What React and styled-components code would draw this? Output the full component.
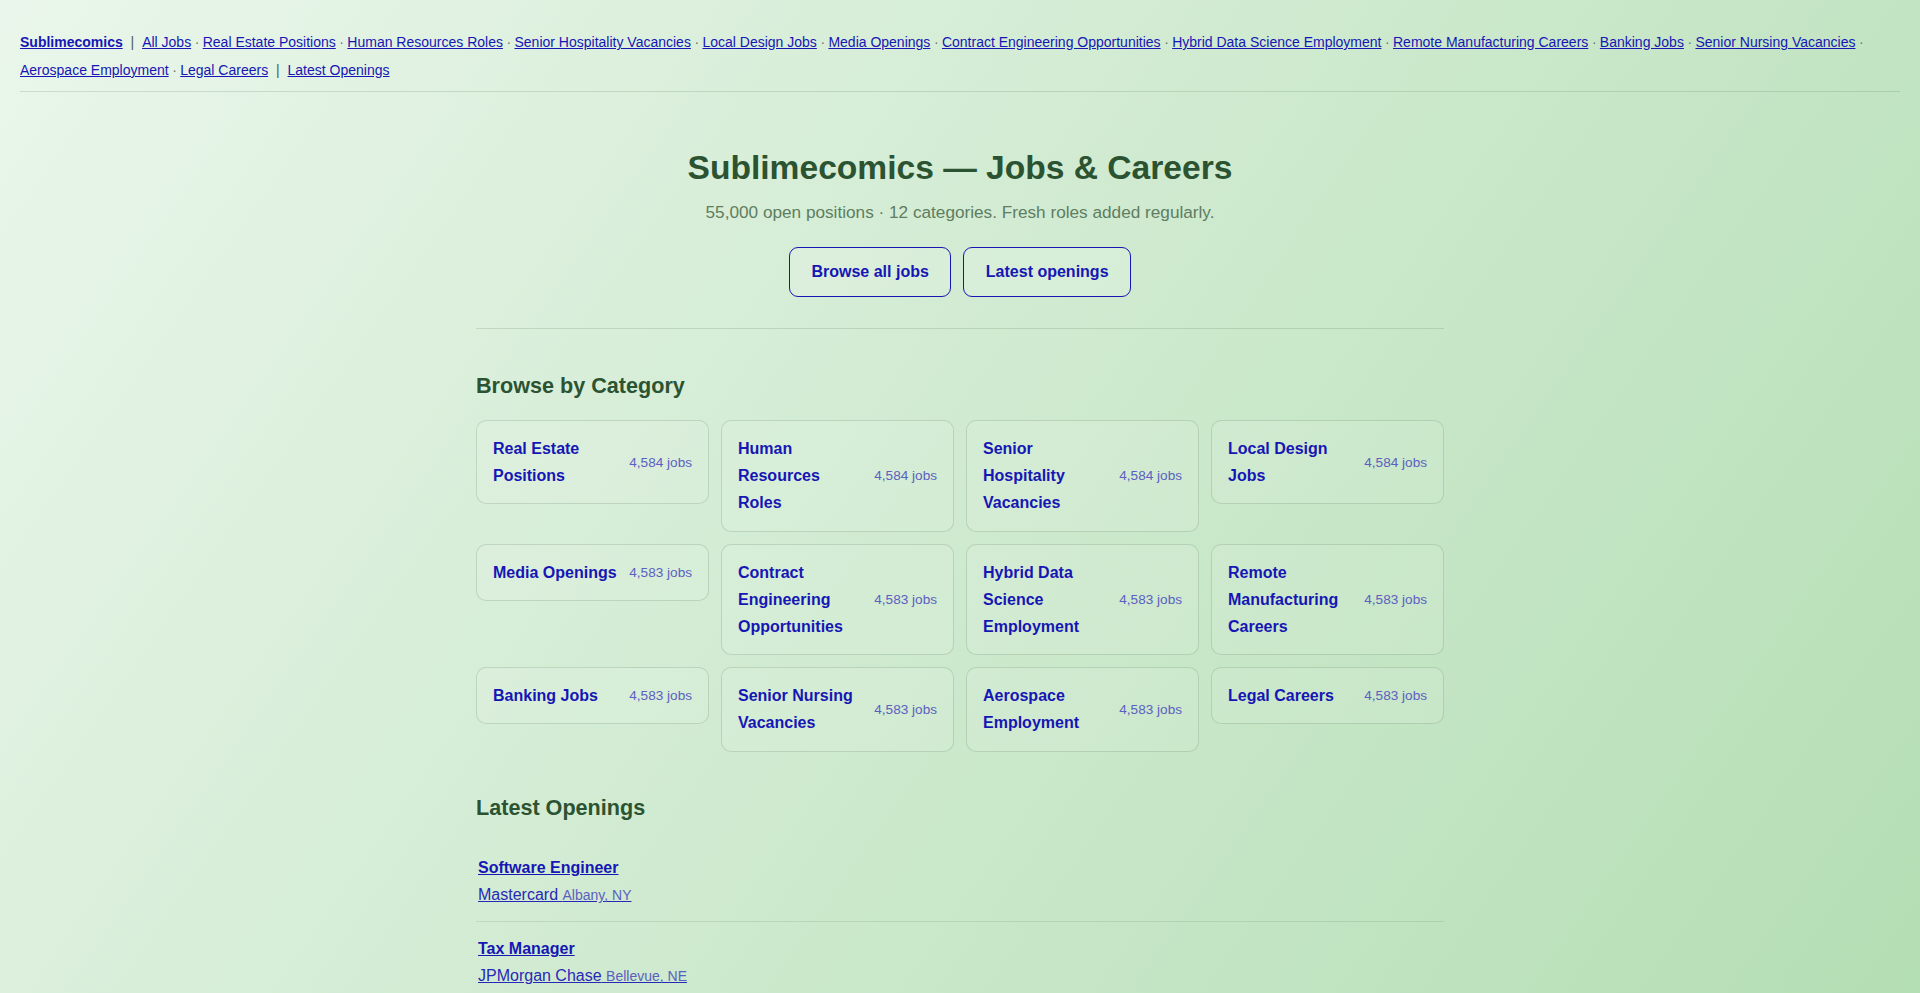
import React from 'react'
import styled, { createGlobalStyle } from 'styled-components'

const navLinks = [
    'Real Estate Positions',
    'Human Resources Roles',
    'Senior Hospitality Vacancies',
    'Local Design Jobs',
    'Media Openings',
    'Contract Engineering Opportunities',
    'Hybrid Data Science Employment',
    'Remote Manufacturing Careers',
    'Banking Jobs',
    'Senior Nursing Vacancies',
    'Aerospace Employment',
    'Legal Careers',
]

const categories = [
    { name: 'Real Estate Positions', count: '4,584' },
    { name: 'Human Resources Roles', count: '4,584' },
    { name: 'Senior Hospitality Vacancies', count: '4,584' },
    { name: 'Local Design Jobs', count: '4,584' },
    { name: 'Media Openings', count: '4,583' },
    { name: 'Contract Engineering Opportunities', count: '4,583' },
    { name: 'Hybrid Data Science Employment', count: '4,583' },
    { name: 'Remote Manufacturing Careers', count: '4,583' },
    { name: 'Banking Jobs', count: '4,583' },
    { name: 'Senior Nursing Vacancies', count: '4,583' },
    { name: 'Aerospace Employment', count: '4,583' },
    { name: 'Legal Careers', count: '4,583' },
]

const openings = [
    { title: 'Software Engineer', company: 'Mastercard', location: 'Albany, NY' },
    { title: 'Tax Manager', company: 'JPMorgan Chase', location: 'Bellevue, NE' },
]

const App = () => {
    return (
        <>
            <GlobalStyle />
            <TopNav>
                <Brand href="#">Sublimecomics</Brand>
                <Pipe> | </Pipe>
                <NavLink href="#">All Jobs</NavLink>
                {navLinks.map((label) => (
                    <React.Fragment key={label}>
                        <Dot> · </Dot>
                        <NavLink href="#">{label}</NavLink>
                    </React.Fragment>
                ))}
                <Pipe> | </Pipe>
                <NavLink href="#">Latest Openings</NavLink>
            </TopNav>

            <Main>
                <Hero>
                    <Title>Sublimecomics — Jobs &amp; Careers</Title>
                    <Subtitle>55,000 open positions · 12 categories. Fresh roles added regularly.</Subtitle>
                    <Actions>
                        <Button href="#">Browse all jobs</Button>
                        <Button href="#">Latest openings</Button>
                    </Actions>
                </Hero>

                <Divider />

                <Section>
                    <SectionTitle>Browse by Category</SectionTitle>
                    <CategoryGrid>
                        {categories.map((c) => (
                            <Card key={c.name} href="#">
                                <CardName>{c.name}</CardName>
                                <CardCount>{c.count} jobs</CardCount>
                            </Card>
                        ))}
                    </CategoryGrid>
                </Section>

                <Section>
                    <SectionTitle>Latest Openings</SectionTitle>
                    <OpeningList>
                        {openings.map((o) => (
                            <Opening key={o.title}>
                                <OpeningTitle href="#">{o.title}</OpeningTitle>
                                <OpeningMeta href="#">
                                    {o.company} <Location>{o.location}</Location>
                                </OpeningMeta>
                            </Opening>
                        ))}
                    </OpeningList>
                </Section>
            </Main>
        </>
    )
}

const GlobalStyle = createGlobalStyle`
    html {
        background: linear-gradient(125deg, #eaf6eb 0%, #b4deb4 100%) fixed;
        min-height: 100%;
    }
    body {
        margin: 0;
        font-family: "Liberation Sans", Arial, sans-serif;
        color: #2c5331;
        line-height: 1.7;
    }
`;

const TopNav = styled.nav`
    margin: 0 20px;
    padding: 28px 0 7px;
    font-size: 14px;
    line-height: 28px;
    border-bottom: 1px solid rgba(40, 80, 40, 0.15);
    color: #5d6e5f;
`;

const NavLink = styled.a`
    color: #1616b4;
    text-decoration: underline;
`;

const Brand = styled(NavLink)`
    font-weight: 700;
`;

const Pipe = styled.span`
    margin: 0 4px;
    color: #4d5d4f;
`;

const Dot = styled.span`
    color: #6a786b;
    letter-spacing: -0.3px;
`;

const Main = styled.main`
    max-width: 1000px;
    margin: 0 auto;
    padding: 0 16px;
    box-sizing: border-box;
`;

const Hero = styled.header`
    text-align: center;
    padding-top: 56px;
`;

const Title = styled.h1`
    margin: 0;
    font-size: 33.6px;
    line-height: 1.2;
    font-weight: 700;
    color: #2c5331;
`;

const Subtitle = styled.p`
    margin: 12px 0 0;
    font-size: 17.2px;
    line-height: 1.5;
    color: #5e7d61;
`;

const Actions = styled.div`
    display: flex;
    justify-content: center;
    gap: 12px;
    margin-top: 21px;
`;

const Button = styled.a`
    display: inline-block;
    padding: 15px 21.5px;
    font-size: 16px;
    line-height: 18px;
    font-weight: 700;
    color: #1616b4;
    text-decoration: none;
    border: 1px solid #1616b4;
    border-radius: 9px;
    background: rgba(255, 255, 255, 0.15);
`;

const Divider = styled.hr`
    margin: 31px 0 0;
    border: 0;
    border-top: 1px solid rgba(40, 80, 40, 0.15);
`;

const Section = styled.section`
    padding-top: 43px;

    &:first-of-type {
        padding-top: 44px;
    }
`;

const SectionTitle = styled.h2`
    margin: 0 0 21px;
    font-size: 21.6px;
    line-height: 1.2;
    font-weight: 700;
    color: #2c5331;
`;

const CategoryGrid = styled.div`
    display: grid;
    grid-template-columns: repeat(4, 1fr);
    gap: 12px;
    align-items: start;
`;

const Card = styled.a`
    display: flex;
    align-items: center;
    justify-content: space-between;
    gap: 10px;
    padding: 14px 16px;
    border: 1px solid rgba(40, 80, 40, 0.16);
    border-radius: 10px;
    background: rgba(255, 255, 255, 0.1);
    text-decoration: none;
`;

const CardName = styled.span`
    flex: 1;
    font-size: 16px;
    line-height: 1.7;
    font-weight: 700;
    color: #1616b4;
`;

const CardCount = styled.span`
    flex-shrink: 0;
    white-space: nowrap;
    font-size: 13.6px;
    color: #5b60c0;
`;

const OpeningList = styled.ul`
    list-style: none;
    margin: 0;
    padding: 0;
`;

const Opening = styled.li`
    display: flex;
    flex-direction: column;
    align-items: flex-start;
    padding: 13px 2px;
    border-bottom: 1px solid rgba(40, 80, 40, 0.12);
`;

const OpeningTitle = styled.a`
    font-size: 16px;
    line-height: 27px;
    font-weight: 700;
    color: #1616b4;
`;

const OpeningMeta = styled.a`
    font-size: 16px;
    line-height: 27px;
    color: #2828b8;
`;

const Location = styled.span`
    font-size: 14px;
    line-height: 1;
    color: #5b60c0;
`;

export default App
